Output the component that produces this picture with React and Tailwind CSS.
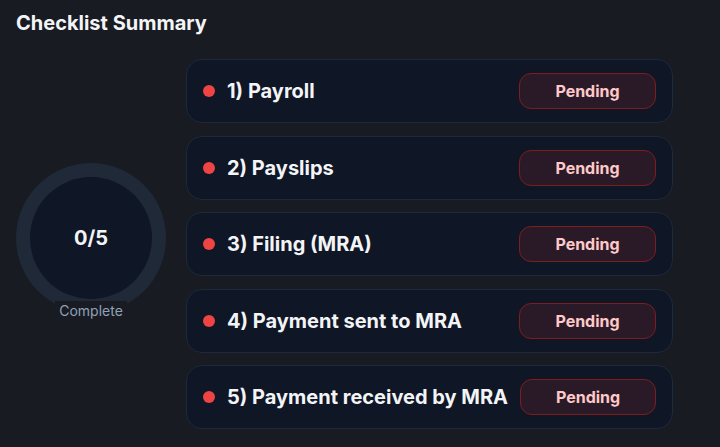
import React from 'react';

const items = [
  '1) Payroll',
  '2) Payslips',
  '3) Filing (MRA)',
  '4) Payment sent to MRA',
  '5) Payment received by MRA',
];

const ChecklistSummary = () => {
  const done = 0;

  return (
    <div className="min-h-[447px] bg-[#181b22] px-4 pt-[9px] font-['Inter',sans-serif] text-gray-100">
      <h2 className="text-xl leading-7 font-bold">Checklist Summary</h2>
      <div className="mt-[22px] flex items-center gap-5">
        <div className="flex w-[150px] flex-col items-center pb-[5px]">
          <div className="flex h-[150px] w-[150px] items-center justify-center rounded-full bg-[#1f2937]">
            <div className="flex h-[122px] w-[122px] items-center justify-center rounded-full bg-[#0f1626]">
              <span className="text-xl font-bold">{done}/{items.length}</span>
            </div>
          </div>
          <span className="relative -mt-[12px] bg-[#181b22] px-1 text-sm leading-5 text-slate-400">Complete</span>
        </div>
        <div className="flex w-[487px] flex-col gap-[12.5px]">
          {items.map((item) => (
            <div key={item} className="flex h-[64px] items-center justify-between gap-3 rounded-2xl border border-[#1e293b] bg-[#0f1626] px-4">
              <div className="flex items-center gap-3 whitespace-nowrap">
                <span className="h-3 w-3 shrink-0 rounded-full bg-[#ef4444]" />
                <span className="text-xl font-bold">{item}</span>
              </div>
              <span className="flex h-9 w-[137px] items-center justify-center rounded-xl border border-[#7f1d1d] bg-[#2a1a27] text-base font-bold text-red-200">
                Pending
              </span>
            </div>
          ))}
        </div>
      </div>
    </div>
  );
};

export default ChecklistSummary;
